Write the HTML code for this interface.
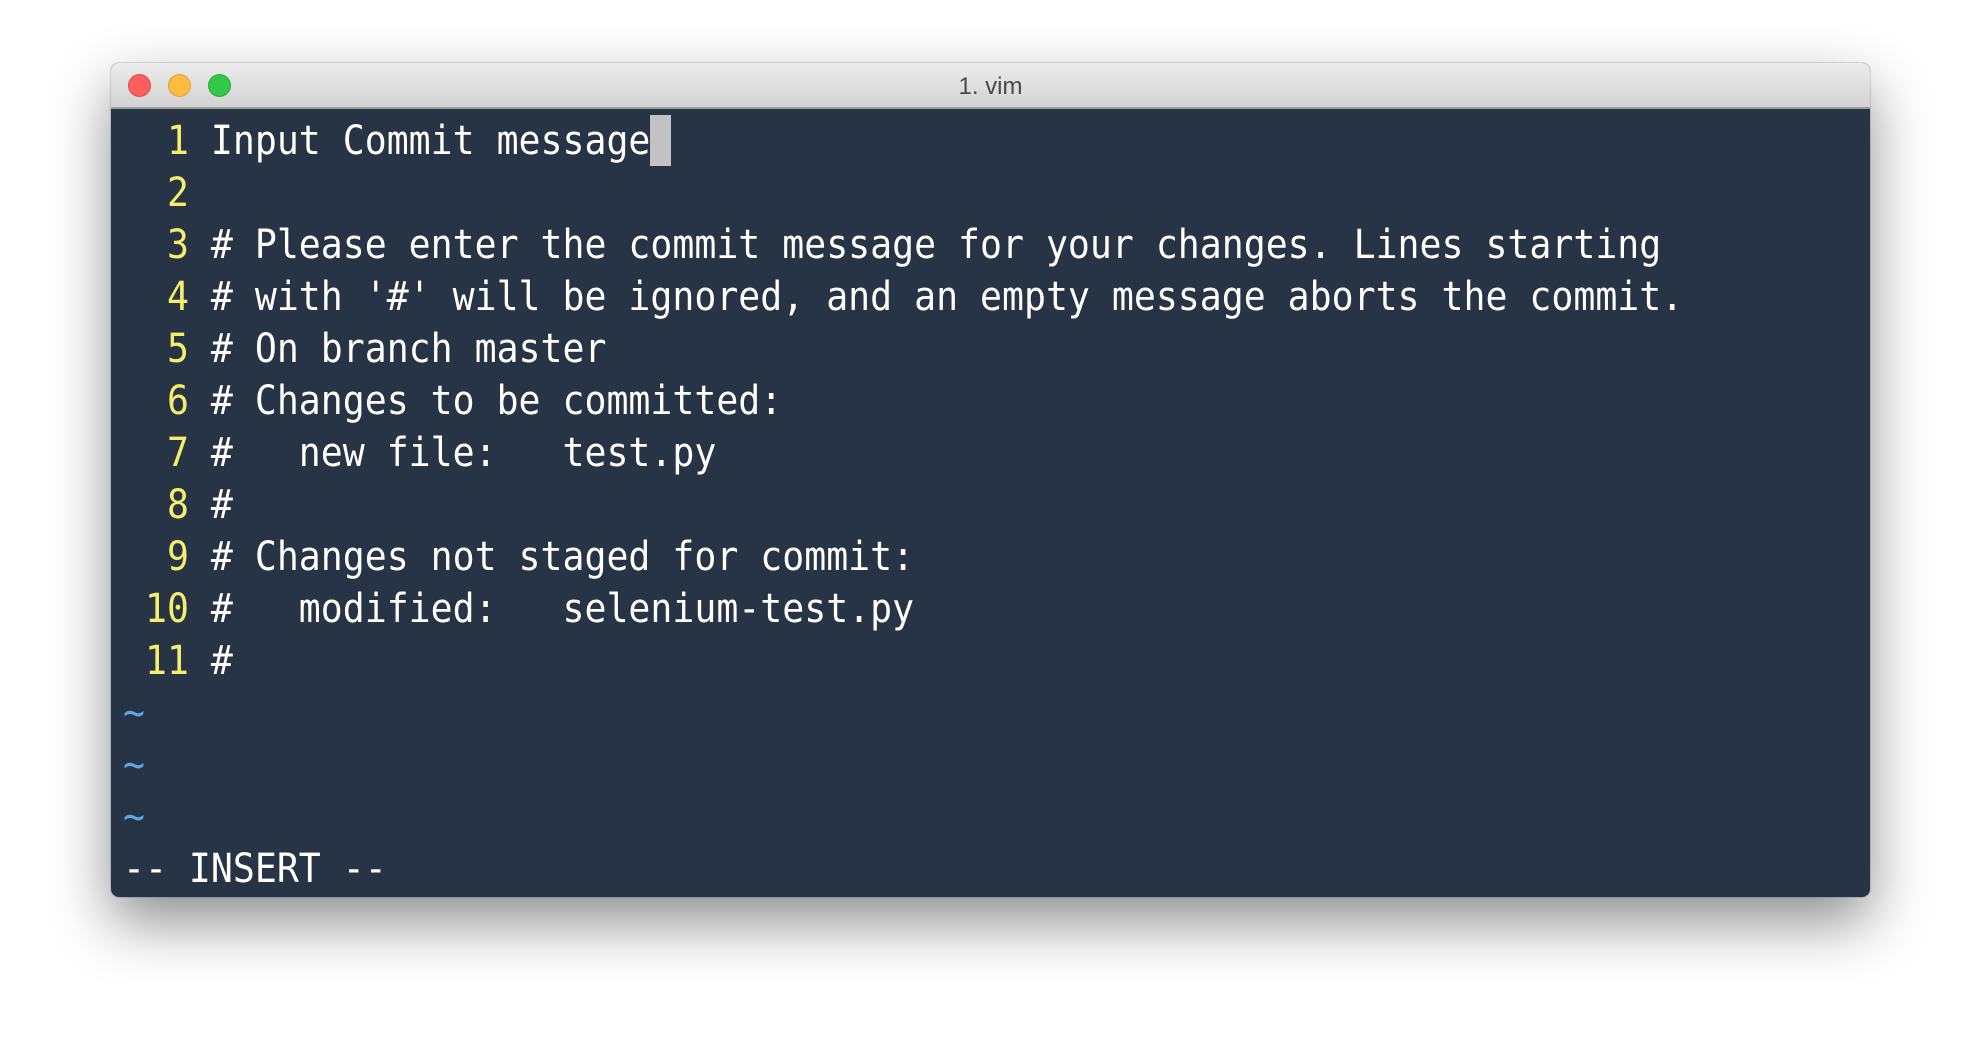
<!DOCTYPE html>
<html><head><meta charset="utf-8"><style>
html,body{margin:0;padding:0;background:#fff;width:1982px;height:1058px;overflow:hidden}
.win{position:absolute;left:111px;top:63px;width:1759px;height:834px;border-radius:8px;overflow:hidden;
box-shadow:0 25px 60px rgba(0,0,0,0.45),0 0 0 1px rgba(0,0,0,0.12);background:#263445}
.title{position:absolute;left:0;top:0;right:0;height:44px;background:linear-gradient(#ececec,#d3d3d3);border-bottom:2px solid #9a9a9a;
font-family:"Liberation Sans",sans-serif;font-size:24px;color:#4a4a4a;text-align:center;line-height:48px}
.dot{position:absolute;top:11px;width:23px;height:23px;border-radius:50%}
.content{position:absolute;left:12px;top:52px;font-family:"DejaVu Sans Mono",monospace;font-size:36.5px;color:#fff}
.l{height:52px;line-height:52px;position:relative;white-space:pre}
.l span.t{display:inline-block;transform:scaleY(1.1)}
.n{color:#f4ee6c}
.b{color:#5ea5ec}
.cur{position:absolute;left:527px;top:0px;width:21px;height:51px;background:#c2c2c2}
</style></head><body>
<div class="win">
<div class="title">1. vim
<div class="dot" style="left:17px;background:#fc605c;border:1px solid #de4a46;box-sizing:border-box"></div>
<div class="dot" style="left:57px;background:#fdbc40;border:1px solid #dea236;box-sizing:border-box"></div>
<div class="dot" style="left:97px;background:#34c84a;border:1px solid #27aa35;box-sizing:border-box"></div>
</div>
<div class="content">
<div class="l"><span class="t"><span class="n">  1 </span>Input Commit message</span><div class="cur"></div></div>
<div class="l"><span class="t"><span class="n">  2 </span></span></div>
<div class="l"><span class="t"><span class="n">  3 </span># Please enter the commit message for your changes. Lines starting</span></div>
<div class="l"><span class="t"><span class="n">  4 </span># with '#' will be ignored, and an empty message aborts the commit.</span></div>
<div class="l"><span class="t"><span class="n">  5 </span># On branch master</span></div>
<div class="l"><span class="t"><span class="n">  6 </span># Changes to be committed:</span></div>
<div class="l"><span class="t"><span class="n">  7 </span>#   new file:   test.py</span></div>
<div class="l"><span class="t"><span class="n">  8 </span>#</span></div>
<div class="l"><span class="t"><span class="n">  9 </span># Changes not staged for commit:</span></div>
<div class="l"><span class="t"><span class="n"> 10 </span>#   modified:   selenium-test.py</span></div>
<div class="l"><span class="t"><span class="n"> 11 </span>#</span></div>
<div class="l"><span class="t b">~</span></div>
<div class="l"><span class="t b">~</span></div>
<div class="l"><span class="t b">~</span></div>
<div class="l"><span class="t">-- INSERT --</span></div>
</div>
</div>
</body></html>
